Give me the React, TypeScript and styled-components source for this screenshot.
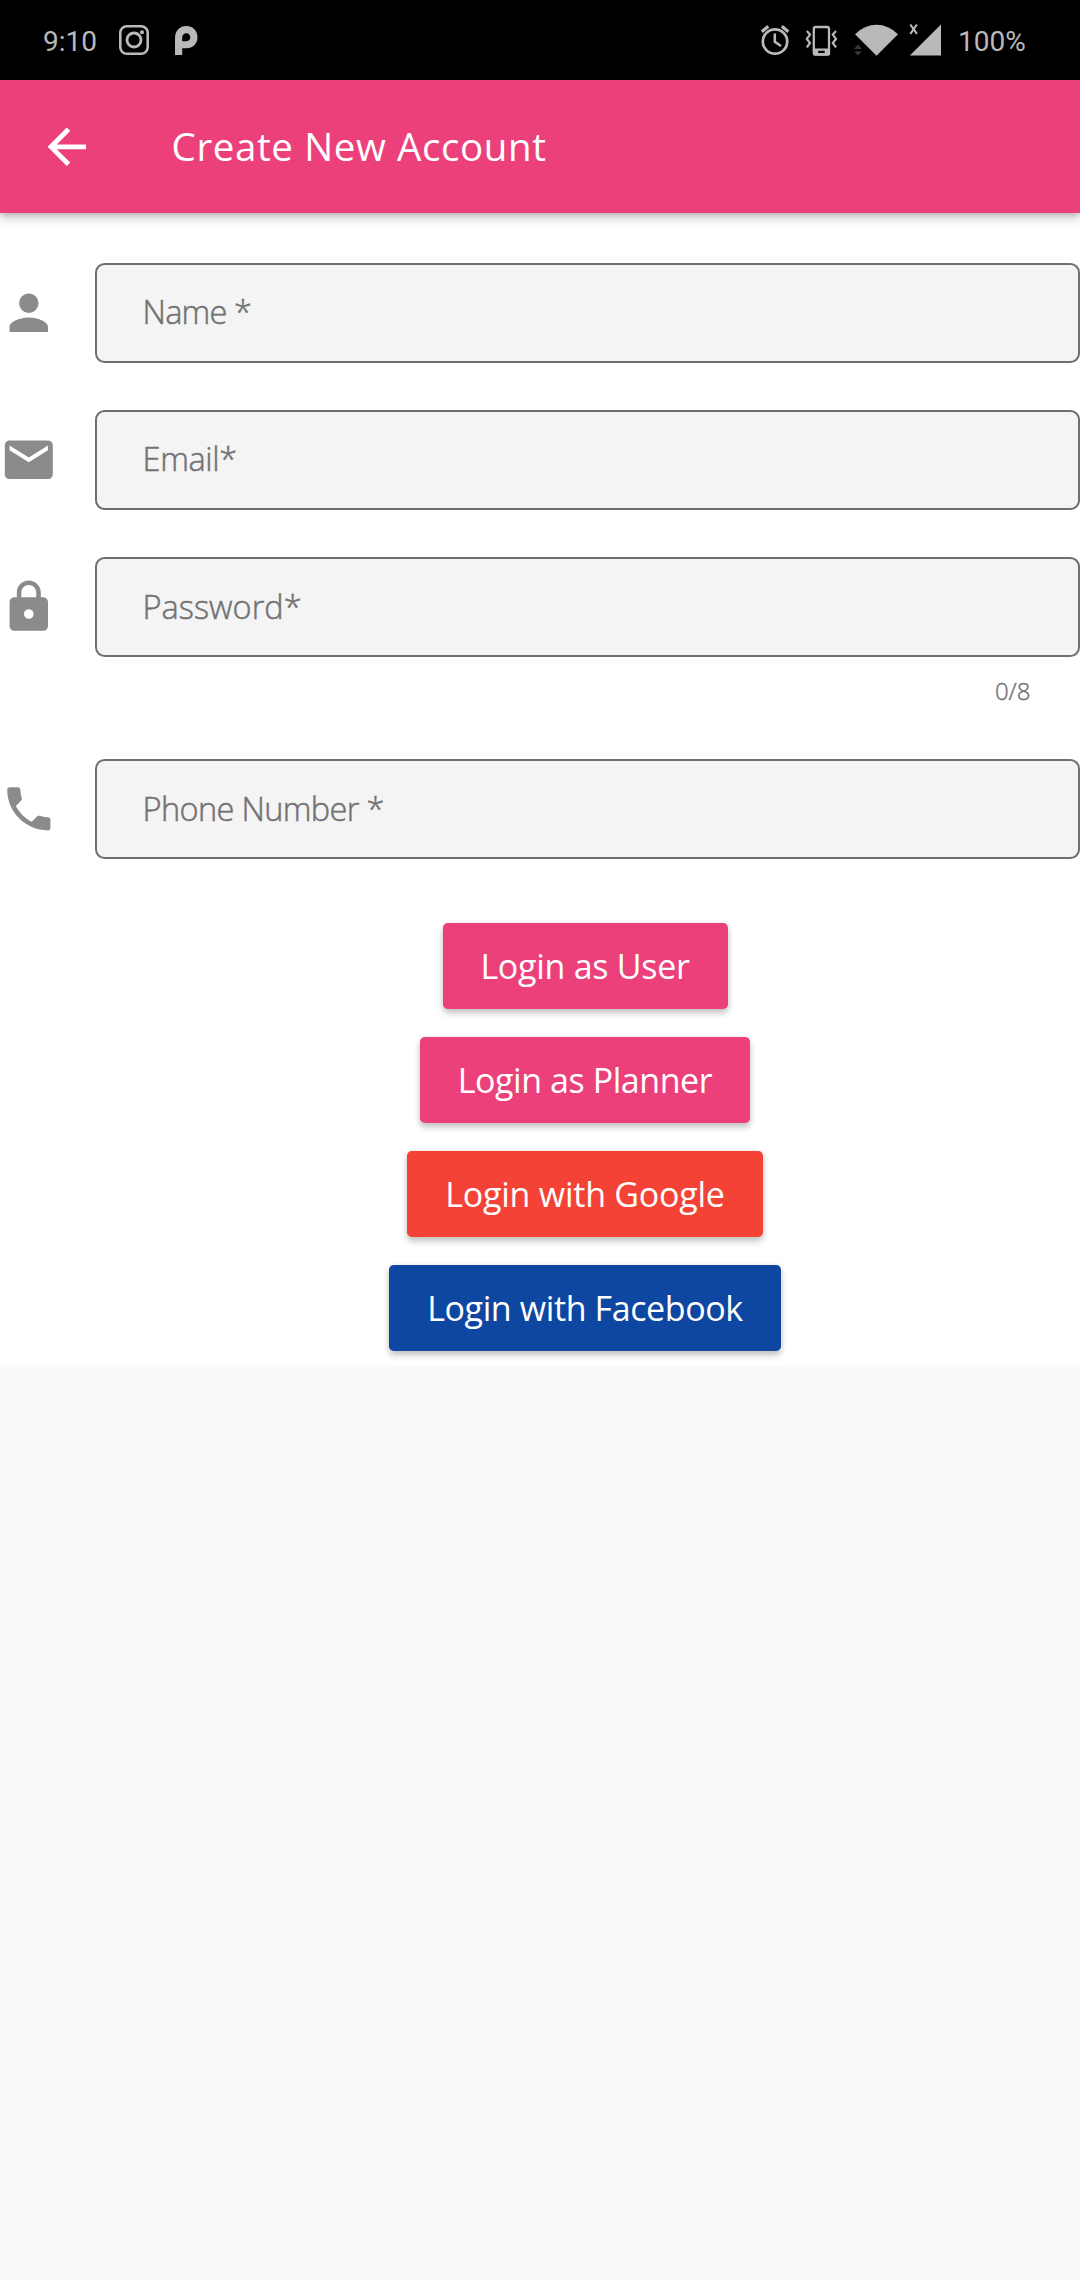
import React from "react";
import styled, { createGlobalStyle } from "styled-components";

const GlobalStyle = createGlobalStyle`
  * { box-sizing: border-box; }
  body { margin: 0; background: #fafafa; }
`;

const Screen = styled.div`
  width: 1080px;
  min-height: 2280px;
  display: flex;
  flex-direction: column;
  background: #fafafa;
  font-family: "Open Sans", "Noto Sans", sans-serif;
  svg { display: block; flex: none; }
`;

const StatusBar = styled.header`
  height: 80px;
  padding: 0 53px 0 43px;
  display: flex;
  justify-content: space-between;
  background: #000;
  color: #b9b9b9;
  font-family: Roboto, sans-serif;
  font-size: 28px;
  line-height: 33px;
`;

const StatusGroup = styled.div<{ $gap?: number }>`
  display: flex;
  align-items: center;
  gap: ${(p) => p.$gap ?? 0}px;
`;

const Clock = styled.span`
  width: 72px;
  padding-top: 3px;
  white-space: nowrap;
`;

const Battery = styled.span`
  width: 69px;
  padding-top: 3px;
  white-space: nowrap;
`;

const AppBar = styled.div`
  position: relative;
  height: 133px;
  padding: 0 38px;
  display: flex;
  align-items: center;
  background: #ec407a;
  color: #fff;
  box-shadow: 0 5px 10px rgba(0, 0, 0, 0.2), 0 2px 5px rgba(0, 0, 0, 0.14);
`;

const Title = styled.h1`
  margin: 0 0 0 76px;
  padding-bottom: 2px;
  font-size: 38.5px;
  font-weight: 400;
  line-height: 52px;
  letter-spacing: 0.6px;
  white-space: nowrap;
`;

const Form = styled.main`
  height: 1152px;
  padding-top: 50px;
  display: flex;
  flex-direction: column;
  background: #fff;
`;

const FieldRow = styled.div<{ $gap: number }>`
  display: flex;
  align-items: center;
  gap: 37.5px;
  margin-bottom: ${(p) => p.$gap}px;
  color: #8b8b8b;
`;

const Field = styled.label<{ $spacing: number }>`
  flex: 1;
  height: 99.5px;
  padding: 0 0 2px 45.5px;
  display: flex;
  align-items: center;
  border: 2.4px solid #6f6f6f;
  border-radius: 9.6px;
  background: #f4f4f4;
  color: #727272;
  font-size: 32.5px;
  font-weight: 300;
  letter-spacing: ${(p) => p.$spacing}px;
  white-space: nowrap;
  -webkit-text-stroke: 0.5px currentColor;
`;

const Counter = styled.div`
  height: 102.5px;
  padding: 17px 49.5px 0 0;
  text-align: right;
  color: #727272;
  font-size: 24px;
  font-weight: 300;
  line-height: 33px;
  -webkit-text-stroke: 0.4px currentColor;
`;

const Actions = styled.div`
  margin-top: 64.5px;
  padding-left: 90px;
  display: flex;
  flex-direction: column;
  align-items: center;
  gap: 28.5px;
`;

const Button = styled.button<{ $color: string; $width: number; $spacing: number }>`
  width: ${(p) => p.$width}px;
  height: 85.5px;
  padding: 0;
  border: 0;
  border-radius: 4.8px;
  background: ${(p) => p.$color};
  box-shadow: 0 5px 6px rgba(0, 0, 0, 0.17), 0 1px 6px rgba(0, 0, 0, 0.13);
  color: #fff;
  font-family: inherit;
  font-size: 34px;
  font-weight: 400;
  letter-spacing: ${(p) => p.$spacing}px;
  white-space: nowrap;
`;

const iconPaths = {
  person: "M12 12c2.21 0 4-1.79 4-4s-1.79-4-4-4-4 1.79-4 4 1.79 4 4 4zm0 2c-2.67 0-8 1.34-8 4v2h16v-2c0-2.66-5.33-4-8-4z",
  mail: "M20 4H4c-1.1 0-1.99.9-1.99 2L2 18c0 1.1.9 2 2 2h16c1.1 0 2-.9 2-2V6c0-1.1-.9-2-2-2zm0 4l-8 5-8-5V6l8 5 8-5v2z",
  lock: "M18 8h-1V6c0-2.76-2.24-5-5-5S7 3.24 7 6v2H6c-1.1 0-2 .9-2 2v10c0 1.1.9 2 2 2h12c1.1 0 2-.9 2-2V10c0-1.1-.9-2-2-2zm-6 9c-1.1 0-2-.9-2-2s.9-2 2-2 2 .9 2 2-.9 2-2 2zm3.1-9H8.9V6c0-1.71 1.39-3.1 3.1-3.1 1.71 0 3.1 1.39 3.1 3.1v2z",
  phone: "M6.62 10.79c1.44 2.83 3.76 5.14 6.59 6.59l2.2-2.2c.27-.27.67-.36 1.02-.24 1.12.37 2.33.57 3.57.57.55 0 1 .45 1 1V20c0 .55-.45 1-1 1-9.39 0-17-7.61-17-17 0-.55.45-1 1-1h3.5c.55 0 1 .45 1 1 0 1.25.2 2.45.57 3.57.11.35.03.74-.25 1.02l-2.2 2.2z",
  back: "M20 11H7.83l5.59-5.59L12 4l-8 8 8 8 1.41-1.41L7.83 13H20v-2z",
};

function MaterialIcon({ name }: { name: keyof typeof iconPaths }) {
  return (
    <svg width="57.6" height="57.6" viewBox="0 0 24 24" fill="currentColor">
      <path d={iconPaths[name]} />
    </svg>
  );
}

function NotificationIcons() {
  return (
    <svg width="90" height="80" viewBox="115 0 90 80" fill="none" stroke="currentColor">
      <rect x="120.3" y="26.3" width="27.4" height="27.4" rx="6.5" strokeWidth="2.6" />
      <circle cx="134" cy="40" r="7" strokeWidth="2.8" />
      <circle cx="142" cy="32.2" r="2" fill="currentColor" stroke="none" />
      <path
        d="M175 55V38c0-7.2 4.8-12 11.3-12S197.5 30.7 197.5 37.2s-4.7 11-11 11h-4.3V55zM182.2 41.2h4.3c2.4 0 3.8-1.6 3.8-3.9s-1.6-4-3.9-4c-2.5 0-4.2 1.7-4.2 4.2z"
        fill="currentColor"
        fillRule="evenodd"
        stroke="none"
      />
    </svg>
  );
}

function SystemIcons() {
  return (
    <svg width="190" height="80" viewBox="755 0 190 80" fill="none" stroke="currentColor">
      <circle cx="775" cy="41.5" r="12.2" strokeWidth="2.8" />
      <path d="M774.8 33.5v8.3l6.2 4.2" strokeWidth="2.5" />
      <path d="M761.8 31.8l6.5-5.5M788.3 31.8l-6.5-5.5" strokeWidth="3.2" />
      <rect x="813.8" y="27" width="15.2" height="27.5" rx="2" strokeWidth="2.3" />
      <path d="M813 48.500h17v5.500q0 1.500-1.500 1.500h-14q-1.500 0-1.500-1.500zM818.200 50.700v2.600h6.500v-2.600z" fill="currentColor" fillRule="evenodd" stroke="none" />
      <path d="M806.8 31l3.2 3.6-3.2 4.3 3.2 4.1-3.2 4.3M836 31l-3.2 3.6 3.2 4.3-3.2 4.1 3.2 4.3" strokeWidth="2.2" />
      <path d="M855 34.2Q864.5 24.7 876.500 24.7T898 34.2L876.5 55.7z" fill="currentColor" stroke="none" />
      <path d="M854 49l4-4.5 4 4.5zM854 51.3h8l-4 4.3z" fill="#373737" stroke="none" />
      <path d="M941 24.5V55.500H909.8z" fill="currentColor" stroke="none" />
      <path d="M910.3 24.5l6.6 9.3M916.9 24.5l-6.6 9.3" strokeWidth="2.1" />
    </svg>
  );
}

export default function App() {
  return (
    <Screen>
      <GlobalStyle />
      <StatusBar>
        <StatusGroup>
          <Clock>9:10</Clock>
          <NotificationIcons />
        </StatusGroup>
        <StatusGroup $gap={13}>
          <SystemIcons />
          <Battery>100%</Battery>
        </StatusGroup>
      </StatusBar>
      <AppBar>
        <MaterialIcon name="back" />
        <Title>Create New Account</Title>
      </AppBar>
      <Form>
        <FieldRow $gap={47.7}>
          <MaterialIcon name="person" />
          <Field $spacing={-0.85}>Name *</Field>
        </FieldRow>
        <FieldRow $gap={47.8}>
          <MaterialIcon name="mail" />
          <Field $spacing={-0.4}>Email*</Field>
        </FieldRow>
        <FieldRow $gap={0}>
          <MaterialIcon name="lock" />
          <Field $spacing={0}>Password*</Field>
        </FieldRow>
        <Counter>0/8</Counter>
        <FieldRow $gap={0}>
          <MaterialIcon name="phone" />
          <Field $spacing={-0.65}>Phone Number *</Field>
        </FieldRow>
        <Actions>
          <Button $color="#ec407a" $width={285} $spacing={-0.28}>Login as User</Button>
          <Button $color="#ec407a" $width={330.5} $spacing={-0.44}>Login as Planner</Button>
          <Button $color="#f44336" $width={356} $spacing={-0.24}>Login with Google</Button>
          <Button $color="#0d47a1" $width={392} $spacing={-0.39}>Login with Facebook</Button>
        </Actions>
      </Form>
    </Screen>
  );
}
